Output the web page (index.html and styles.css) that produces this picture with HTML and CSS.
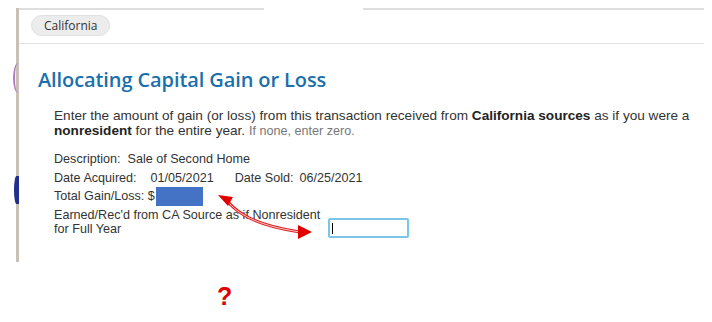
FILE: index.html
```html
<!DOCTYPE html>
<html>
<head>
<meta charset="utf-8">
<link rel="stylesheet" href="styles.css">
</head>
<body>
<div class="shell">
  <div class="edge-marks">
    <span class="mark-purple"></span>
    <span class="mark-blue"></span>
  </div>
  <div class="topline"><span class="seg seg-a"></span><span class="seg seg-b"></span></div>
  <div class="tabs"><span class="pill">California</span></div>
  <div class="content">
    <h1 class="title">Allocating Capital Gain or Loss</h1>
    <div class="body">
      <p class="intro">Enter the amount of gain (or loss) from this transaction received from <b>California sources</b> as if you were a <b>nonresident</b> for the entire year. <span class="hint">If none, enter zero.</span></p>
      <div class="rows">
        <div class="row">Description:&nbsp; Sale of Second Home</div>
        <div class="row">Date Acquired:<span class="v1">01/05/2021</span><span class="k2">Date Sold:</span><span class="v2">06/25/2021</span></div>
        <div class="row">Total Gain/Loss: $<span class="redact"></span></div>
        <div class="row row-input">
          <span class="label2">Earned/Rec'd from CA Source as if Nonresident<br>for Full Year</span>
          <span class="field"><span class="caret"></span></span>
        </div>
      </div>
    </div>
    <svg class="arrow" width="100" height="50" viewBox="0 0 100 50">
      <path d="M10 7 C 20 18, 36 30, 82 37" fill="none" stroke="#e02020" stroke-width="3"/>
      <path d="M10 7 C 20 18, 36 30, 82 37" fill="none" stroke="#f8c8c8" stroke-width="1"/>
      <polygon points="0,0 15,2 10,11" fill="#e00000"/>
      <polygon points="94,37 80,30 80,44" fill="#e00000"/>
    </svg>
  </div>
</div>
<div class="question">?</div>
</body>
</html>
```
FILE: styles.css
```css
html, body {
  margin: 0;
  padding: 0;
  background: #fff;
}
body {
  width: 712px;
  height: 322px;
  overflow: hidden;
  font-family: "Liberation Sans", Arial, sans-serif;
  color: #333;
  position: relative;
}
.shell {
  position: relative;
  margin: 8px 0 0 16px;
  width: 685px;
  height: 254px;
  border-left: 3px solid #c9c0b6;
  display: flex;
  flex-direction: column;
}
.edge-marks .mark-purple {
  position: absolute;
  left: -6px;
  top: 55px;
  width: 8px;
  height: 30px;
  border-left: 2px solid #b07ac8;
  border-radius: 50% 0 0 50%;
}
.edge-marks .mark-blue {
  position: absolute;
  left: -5px;
  top: 168px;
  width: 5px;
  height: 28px;
  background: #1e2f8c;
  border-radius: 60% 0 0 60%;
}
.topline {
  display: flex;
  height: 2px;
  gap: 99px;
}
.seg {
  display: block;
  height: 2px;
  background: #dedede;
}
.seg-a { width: 245px; }
.seg-b { flex: 1; }
.tabs {
  height: 33px;
  display: flex;
  align-items: center;
  padding-left: 12px;
  border-bottom: 1px solid #e2e2e2;
}
.pill {
  height: 21px;
  line-height: 20px;
  padding: 0 11px 0 12px;
  border-radius: 11px;
  background: #ececec;
  border: 1px solid #e0e0e0;
  box-sizing: border-box;
  font-family: "Open Sans", sans-serif;
  font-size: 12px;
  color: #333;
  margin-top: -2px;
}
.content {
  position: relative;
  padding: 22px 0 0 19px;
}
.title {
  margin: 0;
  font-family: "Open Sans", sans-serif;
  font-weight: 600;
  font-size: 20px;
  line-height: 27px;
  color: #1a70ad;
  letter-spacing: -0.1px;
}
.body {
  padding: 15px 0 0 16px;
}
.intro {
  margin: 0;
  font-size: 13.6px;
  line-height: 15px;
  color: #333;
  width: 650px;
}
.intro b { color: #222; }
.hint {
  font-size: 12.6px;
  color: #777;
}
.rows {
  margin-top: 11px;
  font-size: 12.6px;
  color: #333;
}
.row {
  height: 18.7px;
  line-height: 18.7px;
  display: flex;
  align-items: center;
}
.v1 { margin-left: 14px; }
.k2 { margin-left: 21px; }
.v2 { margin-left: 6px; }
.redact {
  display: inline-block;
  width: 47px;
  height: 19px;
  background: #4472c4;
  margin-left: 1px;
}
.row-input {
  height: auto;
  line-height: 14px;
  align-items: flex-start;
  padding-top: 2px;
}
.label2 {
  width: 270px;
}
.field {
  position: relative;
  margin: 10px 0 0 4px;
  width: 81px;
  height: 20px;
  box-sizing: border-box;
  border: 2px solid #7cc5e6;
  border-radius: 2px;
}
.caret {
  position: absolute;
  left: 2px;
  top: 3px;
  width: 1px;
  height: 11px;
  background: #000;
}
.arrow {
  position: absolute;
  left: 199px;
  top: 151px;
}
.question {
  position: absolute;
  left: 217px;
  top: 282px;
  font-family: "Liberation Sans", Arial, sans-serif;
  font-weight: bold;
  font-size: 25px;
  color: #e00000;
}
```
